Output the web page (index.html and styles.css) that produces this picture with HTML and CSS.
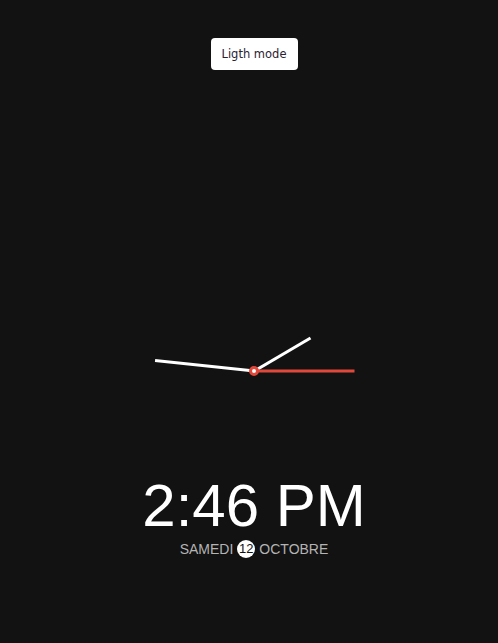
FILE: index.html
```html
<!DOCTYPE html>
<html lang="fr">
<head>
<meta charset="utf-8">
<title>Clock</title>
<link rel="stylesheet" href="styles.css">
</head>
<body>
<main class="page">
  <button class="toggle">Ligth mode</button>
  <div class="clock">
    <div class="hand hour"></div>
    <div class="hand minute"></div>
    <div class="hand second"></div>
    <div class="center"></div>
  </div>
  <div class="time">2:46 PM</div>
  <div class="date">SAMEDI <span class="day">12</span> OCTOBRE</div>
</main>
</body>
</html>
```
FILE: styles.css
```css
html, body {
  margin: 0;
  padding: 0;
  background: #121212;
}
.page {
  display: flex;
  flex-direction: column;
  align-items: center;
  padding: 38px 0 0 10px;
  font-family: "Liberation Sans", Arial, sans-serif;
}
.toggle {
  width: 87px;
  height: 32px;
  border: none;
  border-radius: 4px;
  background: #fff;
  color: #2a2233;
  font-family: "DejaVu Sans", Verdana, sans-serif;
  font-size: 11.5px;
  padding: 0;
  cursor: pointer;
}
.clock {
  position: relative;
  width: 200px;
  height: 200px;
  margin-top: 201px;
}
.hand {
  position: absolute;
  left: 100px;
  bottom: 100px;
  width: 3px;
  margin-left: -1.5px;
  background: #fff;
  transform-origin: 50% 100%;
}
.hour {
  height: 65px;
  transform: rotate(59.5deg);
}
.minute {
  height: 100px;
  transform: rotate(276deg);
}
.second {
  height: 100px;
  background: #e0483b;
  transform: rotate(90deg);
}
.center {
  position: absolute;
  left: 95px;
  top: 95px;
  width: 4px;
  height: 4px;
  border: 3px solid #e0483b;
  border-radius: 50%;
  background: #fff;
}
.time {
  margin-top: 5px;
  font-size: 60px;
  line-height: 60px;
  color: #fff;
}
.date {
  margin-top: 4px;
  font-size: 14px;
  line-height: 18px;
  color: #b4b4b4;
  display: flex;
  align-items: center;
  gap: 4px;
}
.day {
  display: inline-flex;
  align-items: center;
  justify-content: center;
  width: 18px;
  height: 18px;
  border-radius: 50%;
  background: #fff;
  color: #121212;
  font-size: 13px;
}
```
